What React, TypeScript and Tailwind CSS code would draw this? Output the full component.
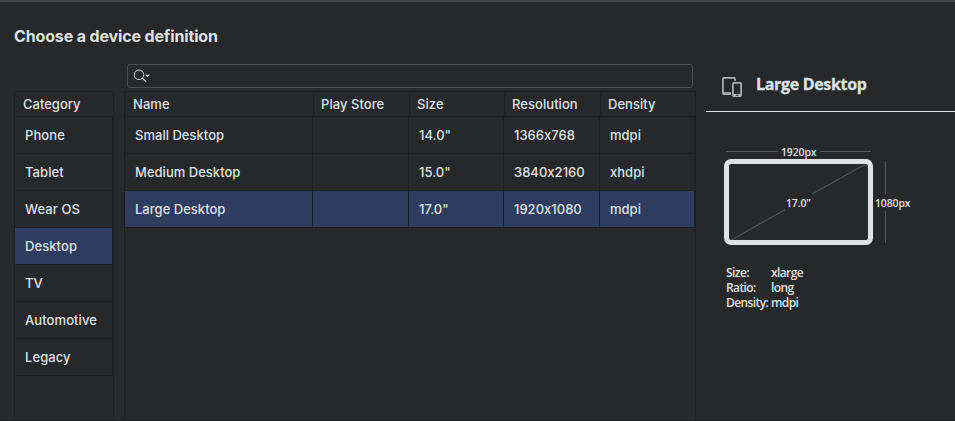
type Device = { name: string; size: string; resolution: string; density: string };

const categories = ["Phone", "Tablet", "Wear OS", "Desktop", "TV", "Automotive", "Legacy"];

const devices: Device[] = [
  { name: "Small Desktop", size: '14.0"', resolution: "1366x768", density: "mdpi" },
  { name: "Medium Desktop", size: '15.0"', resolution: "3840x2160", density: "xhdpi" },
  { name: "Large Desktop", size: '17.0"', resolution: "1920x1080", density: "mdpi" },
];

function CategoryList() {
  return (
    <div className="mt-[91px] ml-[14px] flex w-[100px] shrink-0 flex-col border-x border-t border-[#1e1f22]">
      <div className="flex h-[25px] items-center border-b border-[#1e1f22] pt-0.5 pl-2">Category</div>
      <div>
        {categories.map((c) => (
          <div
            key={c}
            className={`flex h-[37px] items-center border-r border-b border-[#1e1f22] pt-0.5 pl-[10px] tracking-[0.08px] ${
              c === "Desktop" ? "bg-[#2e3c60]" : ""
            }`}
          >
            {c}
          </div>
        ))}
      </div>
    </div>
  );
}

function SearchField() {
  return (
    <div className="ml-[3px] flex h-6 w-[566px] items-center rounded-[3px] border border-[#4b4d53] pl-[5px]">
      <svg width="20" height="16" viewBox="0 0 20 16" fill="none">
        <circle cx="6" cy="6.8" r="4.8" stroke="#ced0d6" strokeWidth="1" />
        <path d="M9.4 10.2L12.9 13.7" stroke="#ced0d6" strokeWidth="1.1" />
        <path d="M12 6.8H17L14.5 9.2Z" fill="#ced0d6" />
      </svg>
    </div>
  );
}

function HeadCell({ label, className }: { label: string; className: string }) {
  return <div className={`flex h-[22px] items-center border-[#1e1f22] pt-0.5 ${className}`}>{label}</div>;
}

function DeviceTable() {
  return (
    <div className="mt-[3px] flex w-[572px] flex-1 flex-col border-x border-t border-[#1e1f22]">
      <div className="flex h-[25px] items-center border-b border-[#1e1f22] tracking-[0.05px]">
        <HeadCell label="Name" className="w-[189px] border-r pl-2" />
        <HeadCell label="Play Store" className="w-24 border-r pl-[7px]" />
        <HeadCell label="Size" className="w-[95px] border-r pl-[7px]" />
        <HeadCell label="Resolution" className="w-24 border-r pl-[7px]" />
        <HeadCell label="Density" className="flex-1 pl-[7px]" />
      </div>
      {devices.map((d) => (
        <div
          key={d.name}
          className={`grid h-[37px] grid-cols-[188px_96px_95px_96px_95px] border-b border-[#1e1f22] tracking-[0.02px] [font-feature-settings:'calt'_0] ${
            d.name === "Large Desktop" ? "bg-[#2e3c60]" : ""
          }`}
        >
          {[d.name, "", d.size, d.resolution, d.density].map((value, i) => (
            <div key={i} className="flex items-center border-r border-[#1e1f22] pt-0.5 pl-[10px]">
              {value}
            </div>
          ))}
        </div>
      ))}
    </div>
  );
}

function Preview() {
  return (
    <div className="ml-[10px] flex flex-1 flex-col font-['Open_Sans',sans-serif] text-[#dfe1e5]">
      <div className="flex h-[112px] border-b border-[#dfe1e5]">
        <svg className="mt-[75px] ml-4 shrink-0" width="22" height="24" viewBox="0 0 22 24" fill="none" stroke="#aeb0b5">
          <path d="M13.1 6V4Q13.1 2.9 12 2.9H2Q0.9 2.9 0.9 4V18Q0.9 19 2 19H9" strokeWidth="1.7" />
          <path d="M1 18.5H9" strokeWidth="2.6" />
          <rect x="10.9" y="7.9" width="8.2" height="13.2" rx="1" strokeWidth="1.7" />
          <path d="M11 20.2H19" strokeWidth="2.6" />
          <path d="M14 20.4H16.3" stroke="#27282a" strokeWidth="1" />
        </svg>
        <h2 className="mt-[73px] ml-3 text-[16px] leading-[22px] font-bold tracking-[-0.32px] whitespace-nowrap [-webkit-text-stroke:0.3px_#dfe1e5]">
          Large Desktop
        </h2>
      </div>
      <svg className="mt-6 ml-[14px]" width="200" height="112" viewBox="720 136 200 112" fill="none">
        <path d="M726 151.5H778M820 151.5H871M885.5 161V194M885.5 211V243" stroke="#595b5e" />
        <path d="M730.5 240.5L785 209.5M812 194L867 163.5" stroke="#515355" strokeWidth="1.2" />
        <rect x="726.5" y="161.5" width="144" height="81" rx="4.5" stroke="#dfe1e5" strokeWidth="5" />
        <g fill="#dfe1e5" fontSize="10.5" fontWeight="600" letterSpacing="-0.15">
          <text x="781" y="156">1920px</text>
          <text x="786" y="207">17.0"</text>
          <text x="875" y="207">1080px</text>
        </g>
      </svg>
      <dl className="mt-[17px] ml-5 grid grid-cols-[45px_1fr] text-[12px] leading-[15px] font-semibold tracking-[-0.6px]">
        <dt>Size:</dt>
        <dd>xlarge</dd>
        <dt>Ratio:</dt>
        <dd>long</dd>
        <dt>Density:</dt>
        <dd>mdpi</dd>
      </dl>
    </div>
  );
}

export default function App() {
  return (
    <div className="relative flex h-[421px] w-[955px] overflow-hidden bg-[#27282a] font-[Inter,sans-serif] text-[13px] font-medium text-[#dfe1e5]">
      <div className="absolute inset-x-0 top-0 h-[2px] bg-[#434447]" />
      <h1 className="absolute top-[26px] left-[14px] text-[16px] leading-5 font-bold tracking-[-0.14px]">
        Choose a device definition
      </h1>
      <CategoryList />
      <div className="ml-[10px] flex w-[572px] shrink-0 flex-col pt-16">
        <SearchField />
        <DeviceTable />
      </div>
      <Preview />
      <div className="absolute inset-x-0 bottom-0 h-px bg-[#1e1f22]" />
    </div>
  );
}
